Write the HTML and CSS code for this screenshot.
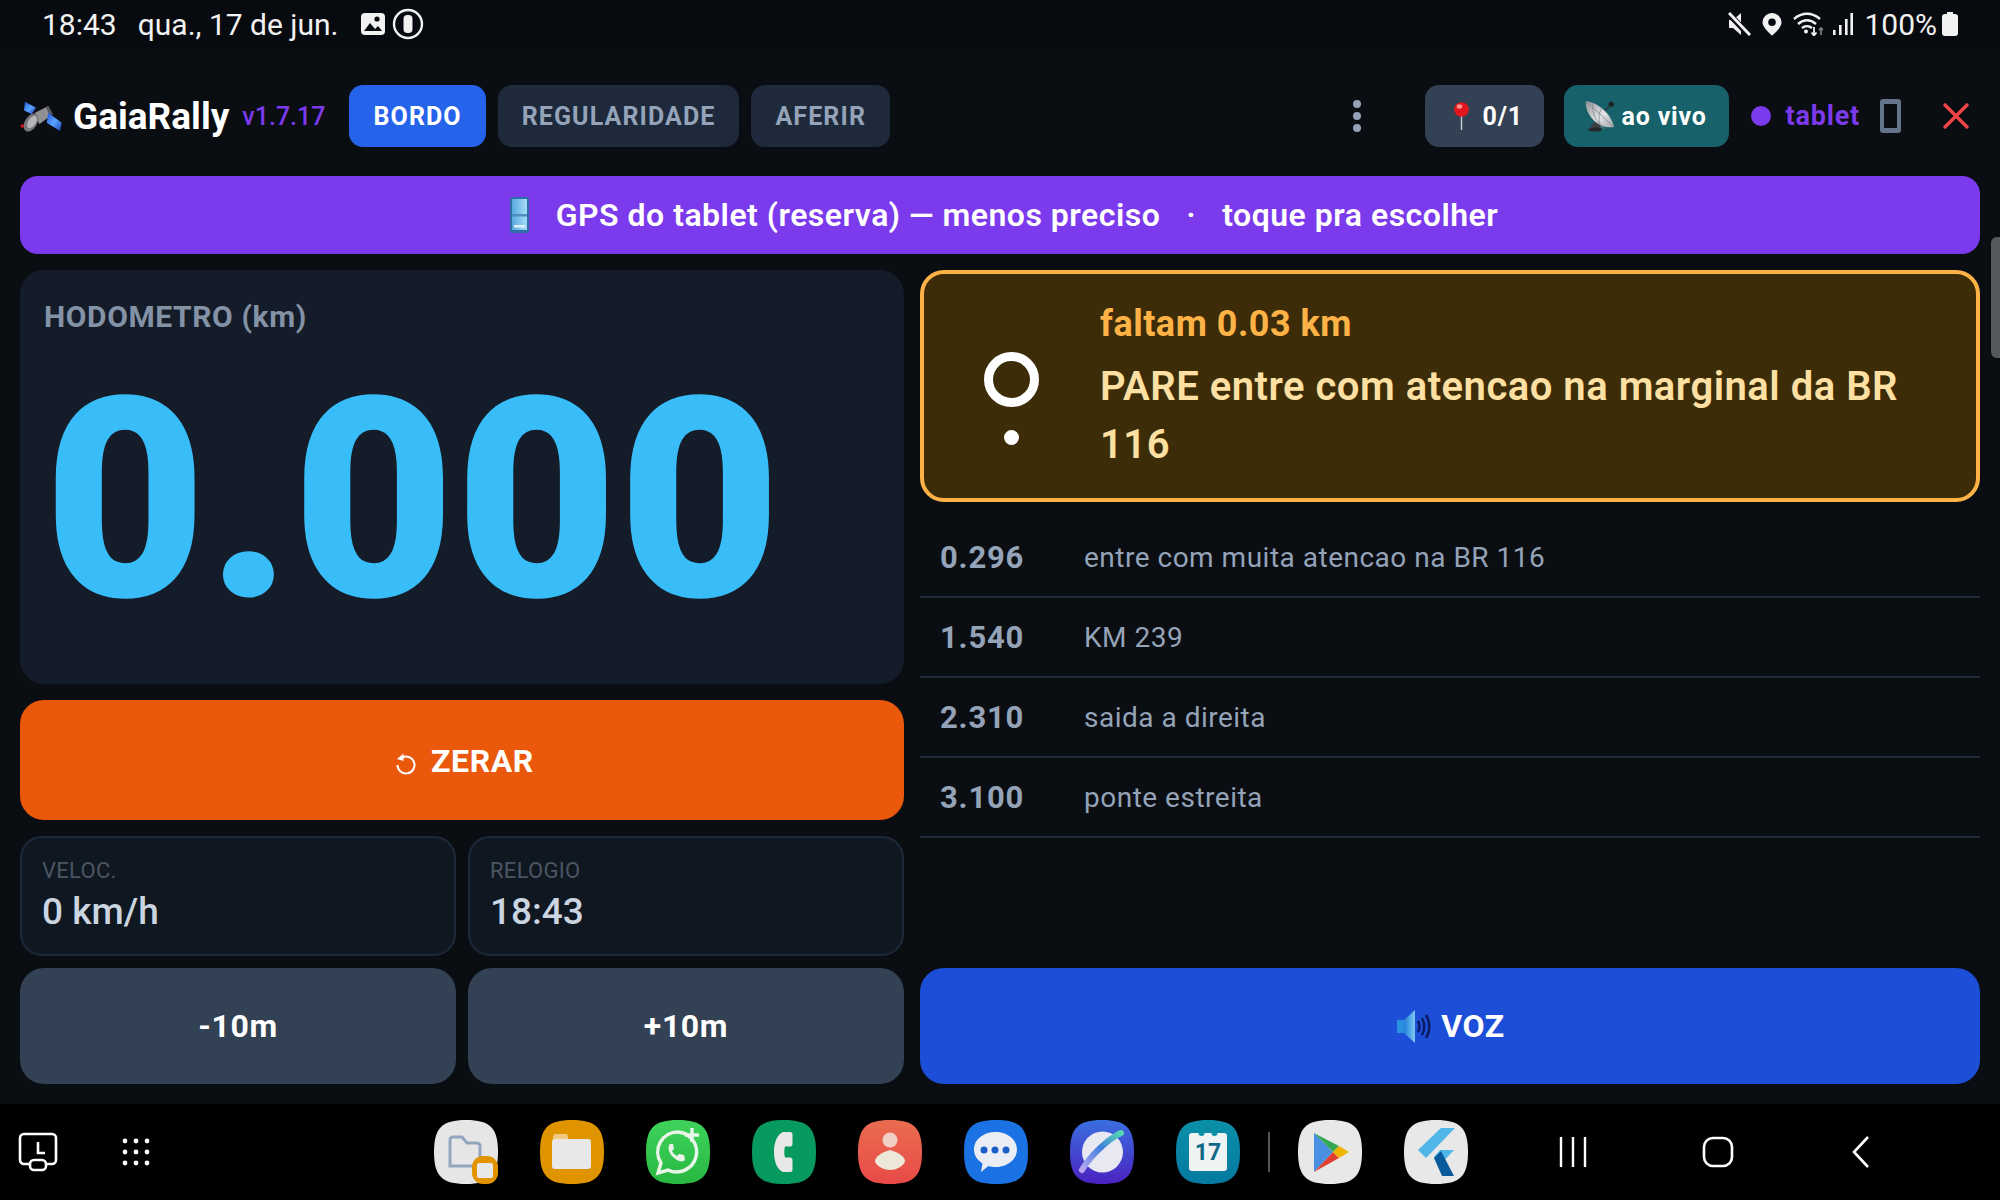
FILE: index.html
```html
<!DOCTYPE html>
<html>
<head>
    <title>GaiaRally</title>
    <meta name="viewport" content="width=device-width, initial-scale=1.0">
    <link rel="stylesheet" href="styles.css">
</head>
<body>
    <!-- Android status bar -->
    <div class="status-bar">
        <div class="status-left">
            <span class="status-time">18:43</span>
            <span>qua., 17 de jun.</span>
            <svg class="status-icon" viewBox="0 0 26 26" width="26" height="26"><rect x="1" y="2" width="24" height="22" rx="4" fill="#f2f2f2"/><circle cx="17" cy="8" r="2.6" fill="#0a0d12"/><path d="M4 20l6-8 5 6 3-3 4 5z" fill="#0a0d12"/></svg>
            <svg class="status-icon" viewBox="0 0 32 32" width="32" height="32"><circle cx="16" cy="16" r="14" fill="none" stroke="#f2f2f2" stroke-width="2.4"/><rect x="11.5" y="7" width="9" height="18" rx="4" fill="#f2f2f2"/></svg>
        </div>
        <div class="status-right">
            <svg class="si-mute" viewBox="0 0 23 24" width="23" height="24"><path d="M1 8h4l8-7v22l-8-7H1z" fill="#f2f2f2"/><path d="M2 3l19 20" stroke="#070a0f" stroke-width="6"/><path d="M1 1l21 22" stroke="#f2f2f2" stroke-width="3"/></svg>
            <svg class="si-loc" viewBox="0 0 20 24" width="20" height="24"><path fill-rule="evenodd" d="M10 1a9.500 9.500 0 0 1 9.500 9.500C19.500 16 10 23.500 10 23.500S.5 16 .5 10.500A9.500 9.500 0 0 1 10 1zm0 5.500a3.800 3.800 0 1 0 0 7.600 3.800 3.800 0 0 0 0-7.600z" fill="#f2f2f2"/></svg>
            <svg class="si-wifi" viewBox="0 0 32 24" width="32" height="24"><g fill="none" stroke="#f2f2f2" stroke-width="2.400"><path d="M1 7c8-7 18-7 26 0"/><path d="M5 12c6-5 12-5 18 0"/><path d="M9 16c3-2.500 7-2.500 10 0"/></g><circle cx="13" cy="19.500" r="2" fill="#f2f2f2"/><path d="M21 15v8M18.500 20.500l2.500 3 2.500-3" fill="none" stroke="#f2f2f2" stroke-width="1.800"/><path d="M28 23v-7M26 18l2-2 2 2" fill="none" stroke="#777" stroke-width="1.800"/></svg>
            <svg class="si-signal" viewBox="0 0 20 24" width="20" height="24"><g fill="#f2f2f2"><rect x="0" y="18" width="2.600" height="5"/><rect x="6" y="13" width="2.600" height="10"/><rect x="12" y="7" width="2.600" height="16"/><rect x="17.400" y="1" width="2.600" height="22"/></g></svg>
            <span class="status-batt">100%</span>
            <svg class="si-battery" viewBox="0 0 16 24" width="16" height="24"><path d="M5 0h6v2h2a3 3 0 0 1 3 3v16a3 3 0 0 1-3 3H3a3 3 0 0 1-3-3V5a3 3 0 0 1 3-3h2z" fill="#f2f2f2"/></svg>
        </div>
    </div>

    <div class="app">
        <!-- Top bar -->
        <div class="topbar">
            <svg class="logo" viewBox="0 0 44 34" width="44" height="34">
                <defs><linearGradient id="panel" x1="0" y1="0" x2="1" y2="1"><stop offset="0" stop-color="#1c4fd8"/><stop offset=".5" stop-color="#5aa5ff"/><stop offset="1" stop-color="#1c3fb0"/></linearGradient></defs>
                <path d="M5 2.700l11 6-4.300 6.600L4 11.300z" fill="url(#panel)"/>
                <path d="M15 13.700L28.300 7l4.400 8.300-13.400 10z" fill="#8f8f94"/>
                <path d="M28.300 7l4.400 8.300-2.400 1.700-4.300-8.500z" fill="#55555a"/>
                <path d="M28.300 13.700l13.400 10L40 32l-13.300-8.300z" fill="url(#panel)"/>
                <ellipse cx="11" cy="23.500" rx="10" ry="6" transform="rotate(-58 11 23.500)" fill="#77777c"/>
                <ellipse cx="12" cy="23" rx="7" ry="3.800" transform="rotate(-58 12 23)" fill="#b5b5ba"/>
                <circle cx="2.300" cy="27" r="1.700" fill="#e01818"/>
            </svg>
            <span class="brand">GaiaRally</span>
            <span class="version">v1.7.17</span>
            <div class="tabs">
                <div class="tab active">BORDO</div>
                <div class="tab">REGULARIDADE</div>
                <div class="tab">AFERIR</div>
            </div>
            <div class="kebab"><i></i><i></i><i></i></div>
            <div class="chip chip-count">
                <svg viewBox="0 0 15 28" width="15" height="28"><line x1="7.500" y1="13" x2="7.500" y2="28" stroke="#c9ccd2" stroke-width="1.400"/><circle cx="7.500" cy="7.500" r="7.300" fill="#e0161c"/><ellipse cx="5.500" cy="4.500" rx="2.800" ry="2.200" fill="#ff8f8f"/></svg>
                <span>0/1</span>
            </div>
            <div class="chip chip-live">
                <svg viewBox="0 0 31 32" width="31" height="32">
                    <defs><linearGradient id="dish" x1="0" y1="0" x2="1" y2="1"><stop offset="0" stop-color="#8d9095"/><stop offset=".55" stop-color="#e2e3e5"/><stop offset="1" stop-color="#a4a6aa"/></linearGradient></defs>
                    <path d="M9 22l-4 7h11l-3-8z" fill="#3a3d42"/>
                    <ellipse cx="10" cy="29.500" rx="7" ry="2" fill="#24272b"/>
                    <path d="M14 15L25 6" stroke="#33363b" stroke-width="1.600"/>
                    <path d="M23 4l3-3 3.500 3-3 3.500z" fill="#1e2125"/>
                    <path d="M1 1C-1 14 14 30 29 27 26 14 14 3 1 1z" fill="url(#dish)"/>
                    <path d="M1 1l28 26M8 3C6 12 12 24 20 29M17 8c-4 5-4 14 0 20" fill="none" stroke="#83868b" stroke-width=".8"/>
                </svg>
                <span>ao vivo</span>
            </div>
            <div class="source">
                <i class="source-dot"></i>
                <span>tablet</span>
                <div class="phone-icon"></div>
            </div>
            <svg class="close" viewBox="0 0 28 28" width="28" height="28"><path d="M2 2l24 24M26 2L2 26" stroke="#ef4444" stroke-width="3.400" fill="none"/></svg>
        </div>

        <!-- GPS source banner -->
        <div class="banner">
            <svg viewBox="0 0 19 36" width="19" height="36">
                <defs><linearGradient id="screen" x1="0" y1="0" x2="1" y2="0"><stop offset="0" stop-color="#57a8e0"/><stop offset="1" stop-color="#a8dcf8"/></linearGradient></defs>
                <rect x="0" y="0" width="19" height="36" rx="2.500" fill="#2e6ea6"/><rect x="2" y="2" width="15" height="31" fill="url(#screen)"/><rect x="2" y="17" width="15" height="2.500" fill="#4f8fc0"/><rect x="4" y="28" width="11" height="2.500" fill="#dff1fb"/></svg>
            <span class="banner-main">GPS do tablet (reserva) — menos preciso</span>
            <span class="banner-sep">·</span>
            <span>toque pra escolher</span>
        </div>

        <div class="main">
            <div class="col">
                <div class="odo">
                    <div class="odo-label">HODOMETRO (km)</div>
                    <div class="odo-value">0.000</div>
                </div>
                <div class="btn btn-zero">
                    <svg class="zero-icon" viewBox="0 0 24 24" width="24" height="24"><path d="M7 5.500a8.500 8.500 0 1 1-4.500 7.500" fill="none" stroke="#fff" stroke-width="2"/><path d="M8.500 1.500v7.500l-6.500-2z" fill="#fff"/></svg>
                    <span>ZERAR</span>
                </div>
                <div class="pair stats">
                    <div class="stat">
                        <div class="stat-label">VELOC.</div>
                        <div class="stat-value">0 km/h</div>
                    </div>
                    <div class="stat">
                        <div class="stat-label">RELOGIO</div>
                        <div class="stat-value">18:43</div>
                    </div>
                </div>
                <div class="pair nudges">
                    <div class="btn btn-nudge">-10m</div>
                    <div class="btn btn-nudge">+10m</div>
                </div>
            </div>

            <div class="col">
                <div class="alert">
                    <div class="alert-mark">
                        <div class="ring"></div>
                        <div class="ring-dot"></div>
                    </div>
                    <div class="alert-text">
                        <div class="alert-dist">faltam 0.03 km</div>
                        <div class="alert-msg">PARE entre com atencao na marginal da BR 116</div>
                    </div>
                </div>
                <div class="list">
                    <div class="row"><span class="row-km">0.296</span><span class="row-text">entre com muita atencao na BR 116</span></div>
                    <div class="row"><span class="row-km">1.540</span><span class="row-text">KM 239</span></div>
                    <div class="row"><span class="row-km">2.310</span><span class="row-text">saida a direita</span></div>
                    <div class="row"><span class="row-km">3.100</span><span class="row-text">ponte estreita</span></div>
                </div>
                <div class="btn btn-voice">
                    <svg viewBox="0 0 34 33" width="34" height="33">
                        <defs><linearGradient id="horn" x1="0" y1="0" x2="1" y2="0"><stop offset="0" stop-color="#1f7fd8"/><stop offset="1" stop-color="#7fc8f4"/></linearGradient></defs>
                        <path d="M0 10h7v13H0z" fill="#2b8fe0"/><path d="M7 10L18 0v33L7 23z" fill="url(#horn)"/><g fill="none" stroke="#0a1a5e" stroke-width="2.400"><path d="M21 11c2 3 2 8 0 11"/><path d="M25 8c3 5 3 12 0 17"/><path d="M29 5c4.500 7 4.500 16 0 23"/></g></svg>
                    <span>VOZ</span>
                </div>
            </div>
        </div>
    </div>

    <!-- Android task bar -->
    <div class="dock">
        <div class="dock-left">
            <svg viewBox="0 0 40 40" width="40" height="40"><g fill="none" stroke="#fff" stroke-width="2.600"><path d="M11 32H6a4 4 0 0 1-4-4V6a4 4 0 0 1 4-4h28a4 4 0 0 1 4 4v22a4 4 0 0 1-4 4h-5"/><rect x="12" y="28" width="16" height="10" rx="4"/><path d="M20 10v11h7"/></g></svg>
            <svg class="apps-grid" viewBox="0 0 28 28" width="28" height="28"><g fill="#fff"><circle cx="3" cy="3" r="2.400"/><circle cx="14" cy="3" r="2.400"/><circle cx="25" cy="3" r="2.400"/><circle cx="3" cy="14" r="2.400"/><circle cx="14" cy="14" r="2.400"/><circle cx="25" cy="14" r="2.400"/><circle cx="3" cy="25" r="2.400"/><circle cx="14" cy="25" r="2.400"/><circle cx="25" cy="25" r="2.400"/></g></svg>
        </div>
        <div class="dock-apps">
            <!-- my files (pair) -->
            <svg viewBox="0 0 64 64" width="64" height="64"><path d="M32 0C56 0 64 8 64 32S56 64 32 64 0 56 0 32 8 0 32 0Z" fill="#e6e6e6"/><path d="M16 46V20a3 3 0 0 1 3-3h9l5 6h10a3 3 0 0 1 3 3v17a3 3 0 0 1-3 3z" fill="none" stroke="#93a6bd" stroke-width="3"/><rect x="38" y="36" width="26" height="28" rx="11" fill="#e29300"/><rect x="43" y="43" width="16" height="15" rx="2" fill="#e8e8e8"/></svg>
            <!-- files -->
            <svg viewBox="0 0 64 64" width="64" height="64"><path d="M32 0C56 0 64 8 64 32S56 64 32 64 0 56 0 32 8 0 32 0Z" fill="#e09400"/><path d="M13 17a3 3 0 0 1 3-3h9a3 3 0 0 1 3 3v5H13z" fill="#f2c980"/><rect x="12" y="19" width="39" height="30" rx="3" fill="#e8e8e8"/></svg>
            <!-- whatsapp -->
            <svg viewBox="0 0 64 64" width="64" height="64"><defs><linearGradient id="wa" x1="0" y1="0" x2="0" y2="1"><stop offset="0" stop-color="#3fd35c"/><stop offset="1" stop-color="#28b842"/></linearGradient></defs><path d="M32 0C56 0 64 8 64 32S56 64 32 64 0 56 0 32 8 0 32 0Z" fill="url(#wa)"/><path d="M32 12a20 20 0 0 0-17 31l-3 10 10-3A20 20 0 1 0 32 12z" fill="none" stroke="#e8f5e8" stroke-width="3.400"/><path d="M24 24c-3 3-1 9 3 13s9 6 12 3l-1-5-5-1-2 2c-2-1-4-3-5-5l2-2-1-5z" fill="#e8f5e8"/><path d="M46 8v14M39 15h14" stroke="#e8f5e8" stroke-width="3.400"/></svg>
            <!-- phone -->
            <svg viewBox="0 0 64 64" width="64" height="64"><path d="M32 0C56 0 64 8 64 32S56 64 32 64 0 56 0 32 8 0 32 0Z" fill="#069a5e"/><path d="M38 12h-7c-5 2-9 9-9 20s4 18 9 20h7a2.500 2.500 0 0 0 2.500-2.500V40a2.500 2.500 0 0 0-2.500-2.500h-5c-1-4-1-7 0-11h5a2.500 2.500 0 0 0 2.500-2.500v-9.500A2.500 2.500 0 0 0 38 12z" fill="#e8e8e8"/></svg>
            <!-- contacts -->
            <svg viewBox="0 0 64 64" width="64" height="64"><defs><linearGradient id="ct" x1="0" y1="0" x2="0" y2="1"><stop offset="0" stop-color="#ea6c50"/><stop offset="1" stop-color="#e84a48"/></linearGradient></defs><path d="M32 0C56 0 64 8 64 32S56 64 32 64 0 56 0 32 8 0 32 0Z" fill="url(#ct)"/><ellipse cx="32" cy="20" rx="7.500" ry="7.500" fill="#f2cfc4"/><path d="M32 30c8 2 15 7 15 11s-8 9-15 9-15-5-15-9 7-9 15-11z" fill="#eee8da"/></svg>
            <!-- messages -->
            <svg viewBox="0 0 64 64" width="64" height="64"><path d="M32 0C56 0 64 8 64 32S56 64 32 64 0 56 0 32 8 0 32 0Z" fill="#1a72e4"/><path d="M31.500 12c12 0 21.500 7.500 21.500 17.500S43.500 47 31.500 47c-3 0-5-.3-7-1l-7.500 6 1.500-8.500C13 40 10 35 10 29.500 10 19.500 19.500 12 31.500 12z" fill="#eaeef4"/><g fill="#1a5fc8"><circle cx="20" cy="30" r="3.500"/><circle cx="31" cy="30" r="3.500"/><circle cx="42" cy="30" r="3.500"/></g></svg>
            <!-- internet -->
            <svg viewBox="0 0 64 64" width="64" height="64">
                <defs>
                    <linearGradient id="net" x1="0" y1="0" x2="0" y2="1"><stop offset="0" stop-color="#3a6fe0"/><stop offset="1" stop-color="#4a22c0"/></linearGradient>
                    <linearGradient id="orbit" x1="1" y1="0" x2="0" y2="1"><stop offset="0" stop-color="#58d8b0"/><stop offset=".45" stop-color="#3f7fdc"/><stop offset="1" stop-color="#bba8f0"/></linearGradient>
                </defs>
                <path d="M32 0C56 0 64 8 64 32S56 64 32 64 0 56 0 32 8 0 32 0Z" fill="url(#net)"/>
                <circle cx="32.500" cy="32" r="20.500" fill="#e8e8f2"/>
                <path d="M51 13C38 19 20 36 12 50" fill="none" stroke="url(#orbit)" stroke-width="6" stroke-linecap="round"/>
            </svg>
            <!-- calendar -->
            <svg viewBox="0 0 64 64" width="64" height="64"><defs><linearGradient id="cal" x1="0" y1="0" x2="0" y2="1"><stop offset="0" stop-color="#0b8fa8"/><stop offset="1" stop-color="#047aa0"/></linearGradient></defs><path d="M32 0C56 0 64 8 64 32S56 64 32 64 0 56 0 32 8 0 32 0Z" fill="url(#cal)"/><rect x="13" y="13" width="38" height="38" rx="3" fill="#eef3f4"/><circle cx="25.500" cy="13" r="3" fill="#0b8fa8"/><circle cx="38.500" cy="13" r="3" fill="#0b8fa8"/><text class="cal-day" x="32" y="40" text-anchor="middle">17</text></svg>
            <div class="dock-divider"></div>
            <!-- play store -->
            <svg viewBox="0 0 64 64" width="64" height="64"><path d="M32 0C56 0 64 8 64 32S56 64 32 64 0 56 0 32 8 0 32 0Z" fill="#e8e8e8"/><path d="M16 13v39l19-20z" fill="#4a90e2"/><path d="M16 13l25 13-6 6z" fill="#34a853"/><path d="M16 52l25-14-6-6z" fill="#e0402f"/><path d="M41 26l10 6-10 6-6-6z" fill="#f0b400"/></svg>
            <!-- flutter -->
            <svg viewBox="0 0 64 64" width="64" height="64"><path d="M32 0C56 0 64 8 64 32S56 64 32 64 0 56 0 32 8 0 32 0Z" fill="#e8e8e8"/><path d="M37 8h14L22 38l-8-8z" fill="#4fb7e8"/><path d="M36 30h14L37 44l-7-7z" fill="#4fb7e8"/><path d="M30 38l7-7 13 25H38z" fill="#0a5a9c"/></svg>
        </div>
        <div class="dock-nav">
            <svg viewBox="0 0 28 30" width="28" height="30"><path d="M2 0v30M14 0v30M26 0v30" stroke="#fff" stroke-width="2.400"/></svg>
            <svg class="nav-home" viewBox="0 0 32 32" width="32" height="32"><rect x="2" y="2" width="28" height="28" rx="9" fill="none" stroke="#fff" stroke-width="2.600"/></svg>
            <svg viewBox="0 0 18 32" width="18" height="32"><path d="M16 1L2 16l14 15" fill="none" stroke="#fff" stroke-width="2.600"/></svg>
        </div>
    </div>

    <div class="scroll-handle"></div>
</body>
</html>
```

FILE: styles.css
```css
body {
    margin: 0;
    width: 2000px;
    height: 1200px;
    background-color: #0a0d12;
    color: #fff;
    font-family: Roboto, "Liberation Sans", sans-serif;
    display: flex;
    flex-direction: column;
    overflow: hidden;
    position: relative;
}

svg {
    display: block;
    flex-shrink: 0;
}

/* Status bar */
.status-bar {
    height: 48px;
    background-color: #070a0f;
    display: flex;
    justify-content: space-between;
    align-items: center;
    padding: 0 42px;
    font-size: 30px;
    color: #f2f2f2;
}

.status-left {
    display: flex;
    align-items: center;
    gap: 10px;
}

.status-time {
    margin-right: 11px;
}

.status-icon {
    margin-left: 11px;
}

.status-icon + .status-icon {
    margin-left: -4px;
}

.status-right {
    display: flex;
    align-items: center;
}

.si-loc {
    margin-left: 11px;
}

.si-wifi {
    margin-left: 11px;
}

.si-signal {
    margin-left: 8px;
}

.status-batt {
    margin-left: 11px;
}

.si-battery {
    margin-left: 5px;
}

.app {
    flex: 1;
    padding: 0 20px 20px;
    display: flex;
    flex-direction: column;
    min-height: 0;
}

/* Top bar */
.topbar {
    height: 62px;
    margin-top: 37px;
    display: flex;
    align-items: center;
}

.brand {
    font-size: 37px;
    font-weight: 700;
    margin-left: 9px;
}

.version {
    font-size: 25px;
    font-weight: 500;
    color: #7c3aed;
    margin-left: 13px;
}

.tabs {
    display: flex;
    gap: 12px;
    margin-left: 24px;
    flex: 1;
    height: 100%;
}

.tab {
    background-color: #1e293b;
    color: #94a3b8;
    font-size: 25px;
    font-weight: 700;
    padding: 0 24px;
    border-radius: 14px;
    display: flex;
    align-items: center;
    letter-spacing: 1.1px;
}

.tab.active {
    background-color: #2563eb;
    color: #fff;
}

.kebab {
    display: flex;
    flex-direction: column;
    gap: 4px;
    margin-right: 64px;
}

.kebab i {
    width: 8px;
    height: 8px;
    border-radius: 50%;
    background-color: #94a3b8;
}

.chip {
    height: 100%;
    display: flex;
    align-items: center;
    border-radius: 14px;
    font-size: 25px;
    font-weight: 700;
    letter-spacing: 0.8px;
    box-sizing: border-box;
}

.chip-count {
    width: 119px;
    background-color: #334155;
    padding-left: 29px;
    gap: 14px;
    margin-right: 20px;
}

.chip-live {
    width: 165px;
    background-color: #17616a;
    padding-left: 21px;
    gap: 6px;
}

.source {
    display: flex;
    align-items: center;
    margin-left: 22px;
    color: #7c3aed;
    font-size: 27px;
    font-weight: 700;
    letter-spacing: 0.8px;
}

.source-dot {
    width: 20px;
    height: 20px;
    border-radius: 50%;
    background-color: #7c3aed;
    margin-right: 15px;
}

.phone-icon {
    width: 21px;
    height: 34px;
    box-sizing: border-box;
    border: 4px solid #64748b;
    border-top-width: 5px;
    border-bottom-width: 5px;
    border-radius: 3px;
    margin-left: 20px;
}

.close {
    margin-left: 41px;
    margin-right: 10px;
}

/* Banner */
.banner {
    height: 78px;
    margin-top: 29px;
    padding-left: 8px;
    background-color: #7c3aed;
    border-radius: 18px;
    display: flex;
    align-items: center;
    justify-content: center;
    font-size: 32px;
    font-weight: 600;
    letter-spacing: 0.5px;
}

.banner-main {
    margin-left: 27px;
}

.banner-sep {
    margin: 0 26px;
}

/* Two columns */
.main {
    flex: 1;
    margin-top: 16px;
    display: grid;
    grid-template-columns: 884px 1060px;
    gap: 16px;
    min-height: 0;
}

.col {
    display: flex;
    flex-direction: column;
    min-height: 0;
}

.odo {
    height: 414px;
    background-color: #141c29;
    border-radius: 24px;
    padding: 30px 24px;
    box-sizing: border-box;
    overflow: hidden;
}

.odo-label {
    font-size: 30px;
    line-height: 33px;
    font-weight: 700;
    color: #8492a6;
    letter-spacing: 0.6px;
}

.odo-value {
    font-size: 280px;
    font-weight: 900;
    line-height: normal;
    letter-spacing: 0.7px;
    color: #38bdf8;
    margin-top: 3px;
}

.btn {
    display: flex;
    align-items: center;
    justify-content: center;
    font-weight: 700;
    font-size: 32px;
    letter-spacing: 0.6px;
    border-radius: 24px;
}

.btn-zero {
    height: 120px;
    margin-top: 16px;
    padding: 2px 0 0 5px;
    box-sizing: border-box;
    background-color: #ea580c;
    gap: 12px;
}

.zero-icon {
    margin-top: 5px;
}

.pair {
    display: grid;
    grid-template-columns: 1fr 1fr;
    gap: 12px;
}

.stats {
    margin-top: 16px;
    height: 120px;
}

.stat {
    background-color: #0f1720;
    border: 2px solid #1e293b;
    border-radius: 22px;
    padding: 20px 20px;
    box-sizing: border-box;
}

.stat-label {
    font-size: 22px;
    color: #4b5563;
    letter-spacing: 0.3px;
}

.stat-value {
    font-size: 37px;
    font-weight: 500;
    color: #cbd5e1;
    margin-top: 7px;
}

.nudges {
    margin-top: 12px;
    height: 116px;
}

.btn-nudge {
    background-color: #334155;
}

/* Next instruction */
.alert {
    height: 232px;
    box-sizing: border-box;
    background-color: #3d2c08;
    border: 4px solid #ffb347;
    border-radius: 24px;
    display: flex;
    align-items: center;
}

.alert-mark {
    width: 176px;
    flex-shrink: 0;
    display: flex;
    flex-direction: column;
    align-items: center;
    margin-top: 24px;
    margin-left: -1px;
    margin-right: 1px;
}

.ring {
    width: 55px;
    height: 55px;
    box-sizing: border-box;
    border: 9px solid #fff;
    border-radius: 50%;
}

.ring-dot {
    width: 15px;
    height: 15px;
    border-radius: 50%;
    background-color: #fff;
    margin-top: 23px;
}

.alert-text {
    flex: 1;
    padding: 4px 20px 0 0;
}

.alert-dist {
    font-size: 36px;
    font-weight: 700;
    color: #ffb347;
    letter-spacing: 0.5px;
}

.alert-msg {
    font-size: 40px;
    font-weight: 600;
    color: #ffe0a3;
    line-height: 58px;
    letter-spacing: 0.5px;
    margin-top: 13px;
}

.list {
    flex: 1;
    margin-top: 16px;
}

.row {
    height: 80px;
    box-sizing: border-box;
    border-bottom: 2px solid #1e293b;
    display: flex;
    align-items: center;
    padding-left: 20px;
}

.row-km {
    width: 144px;
    font-size: 31px;
    font-weight: 700;
    letter-spacing: 0.8px;
    color: #94a3b8;
}

.row-text {
    font-size: 28px;
    color: #94a3b8;
    letter-spacing: 0.5px;
}

.btn-voice {
    height: 116px;
    padding-left: 2px;
    background-color: #1d4ed8;
    gap: 10px;
}

/* Task bar */
.dock {
    height: 96px;
    background-color: #000;
    display: flex;
    align-items: center;
    position: relative;
}

.dock-left {
    display: flex;
    align-items: center;
    width: 434px;
    box-sizing: border-box;
    padding-left: 18px;
    gap: 64px;
}

.dock-apps {
    display: flex;
    align-items: center;
    gap: 42px;
}

.dock-divider {
    width: 2px;
    height: 40px;
    background-color: #555;
    margin: 0 -14px;
}

.cal-day {
    font-family: Roboto, "Liberation Sans", sans-serif;
    font-size: 23px;
    font-weight: 700;
    fill: #0e6a85;
}

.dock-nav {
    display: flex;
    align-items: center;
    margin-left: 91px;
}

.nav-home {
    margin: 0 118px 0 115px;
}

.scroll-handle {
    position: absolute;
    top: 237px;
    right: 0;
    width: 9px;
    height: 121px;
    background-color: #55585c;
    border-radius: 6px 0 0 6px;
}
```
